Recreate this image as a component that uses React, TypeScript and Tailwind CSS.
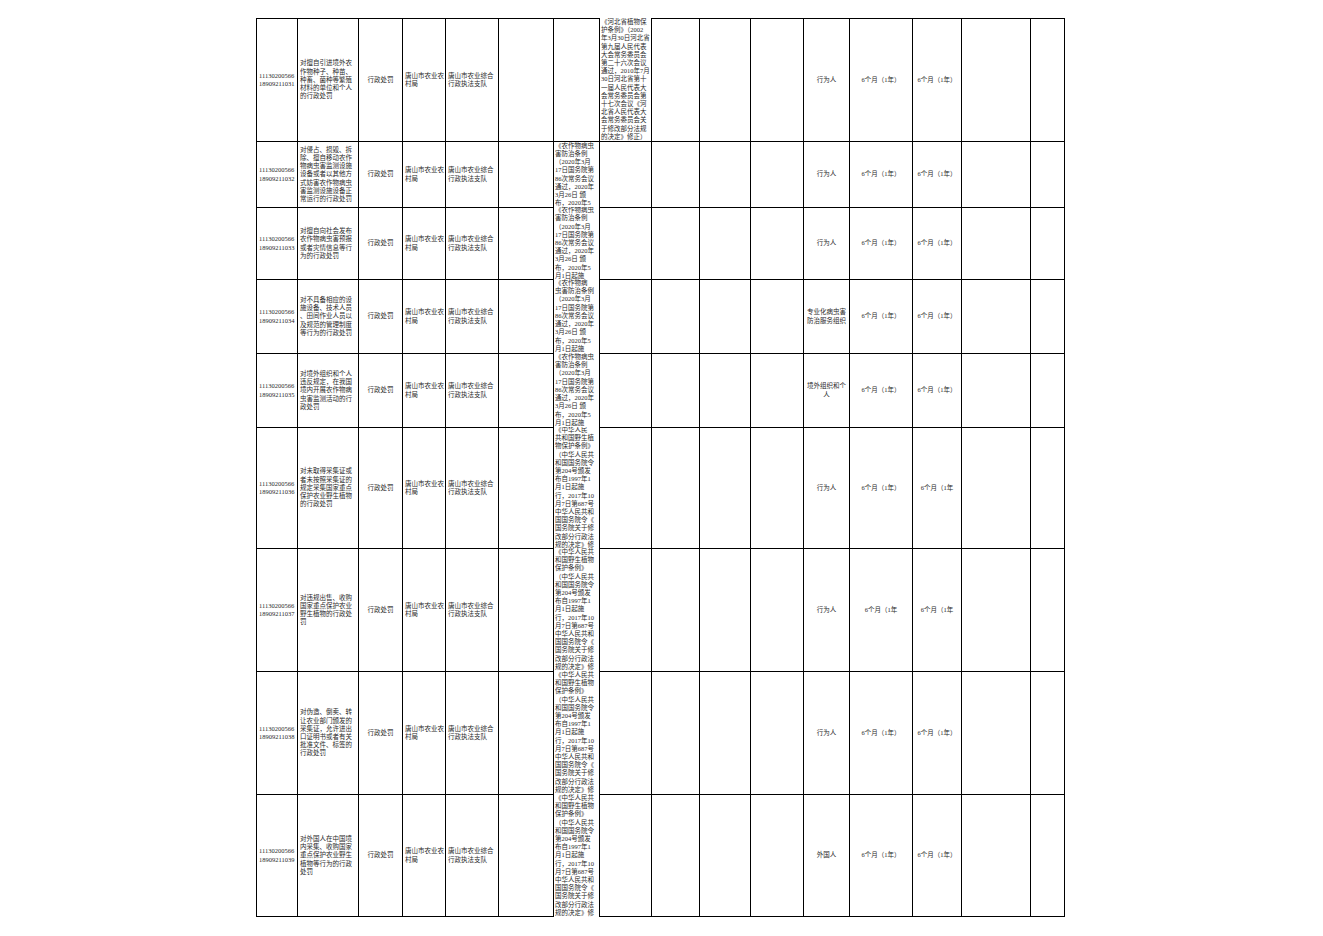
import React from 'react';

interface Row {
  id: string;
  desc: string[];
  law7: string[] | null;
  law8: string[] | null;
  subject: string[];
  t1: string;
  t2: string;
}

const PEST = [
  '《农作物病虫',
  '害防治条例',
  '（2020年3月',
  '17日国务院第',
  '86次常务会议',
  '通过，2020年',
  '3月26日 颁',
  '布，2020年5',
  '月1日起施',
];

const PLANT = [
  '《中华人民共',
  '和国野生植物',
  '保护条例》',
  '（中华人民共',
  '和国国务院令',
  '第204号颁发',
  '布自1997年1',
  '月1日起施',
  '行，2017年10',
  '月7日第687号',
  '中华人民共和',
  '国国务院令《',
  '国务院关于修',
  '改部分行政法',
  '规的决定》修',
];

const HEBEI = [
  '《河北省植物保',
  '护条例》（2002',
  '年3月30日河北省',
  '第九届人民代表',
  '大会常务委员会',
  '第二十六次会议',
  '通过，2010年7月',
  '30日河北省第十',
  '一届人民代表大',
  '会常务委员会第',
  '十七次会议《河',
  '北省人民代表大',
  '会常务委员会关',
  '于修改部分法规',
  '的决定》修正）',
];

const FULL = '6个月（1年）';
const CUT = '6个月（1年';

const rows: Row[] = [
  {
    id: '18909211031',
    desc: ['对擅自引进境外农', '作物种子、种苗、', '种畜、菌种等繁殖', '材料的单位和个人', '的行政处罚'],
    law7: null,
    law8: HEBEI,
    subject: ['行为人'],
    t1: FULL,
    t2: FULL,
  },
  {
    id: '18909211032',
    desc: ['对侵占、损毁、拆', '除、擅自移动农作', '物病虫害监测设施', '设备或者以其他方', '式妨害农作物病虫', '害监测设施设备正', '常运行的行政处罚'],
    law7: PEST.slice(0, 8),
    law8: null,
    subject: ['行为人'],
    t1: FULL,
    t2: FULL,
  },
  {
    id: '18909211033',
    desc: ['对擅自向社会发布', '农作物病虫害预报', '或者灾情信息等行', '为的行政处罚'],
    law7: PEST,
    law8: null,
    subject: ['行为人'],
    t1: FULL,
    t2: FULL,
  },
  {
    id: '18909211034',
    desc: ['对不具备相应的设', '施设备、技术人员', '、田间作业人员以', '及规范的管理制度', '等行为的行政处罚'],
    law7: ['《农作物病', '虫害防治条例', ...PEST.slice(2)],
    law8: null,
    subject: ['专业化病虫害', '防治服务组织'],
    t1: FULL,
    t2: FULL,
  },
  {
    id: '18909211035',
    desc: ['对境外组织和个人', '违反规定，在我国', '境内开展农作物病', '虫害监测活动的行', '政处罚'],
    law7: PEST,
    law8: null,
    subject: ['境外组织和个', '人'],
    t1: FULL,
    t2: FULL,
  },
  {
    id: '18909211036',
    desc: ['对未取得采集证或', '者未按照采集证的', '规定采集国家重点', '保护农业野生植物', '的行政处罚'],
    law7: ['《中华人民', '共和国野生植', '物保护条例》', ...PLANT.slice(3)],
    law8: null,
    subject: ['行为人'],
    t1: FULL,
    t2: CUT,
  },
  {
    id: '18909211037',
    desc: ['对违规出售、收购', '国家重点保护农业', '野生植物的行政处', '罚'],
    law7: PLANT,
    law8: null,
    subject: ['行为人'],
    t1: CUT,
    t2: CUT,
  },
  {
    id: '18909211038',
    desc: ['对伪造、倒卖、转', '让农业部门颁发的', '采集证，允许进出', '口证明书或者有关', '批准文件、标签的', '行政处罚'],
    law7: PLANT,
    law8: null,
    subject: ['行为人'],
    t1: FULL,
    t2: FULL,
  },
  {
    id: '18909211039',
    desc: ['对外国人在中国境', '内采集、收购国家', '重点保护农业野生', '植物等行为的行政', '处罚'],
    law7: PLANT,
    law8: null,
    subject: ['外国人'],
    t1: FULL,
    t2: FULL,
  },
];

function Lines({ lines }: { lines: string[] }) {
  return (
    <>
      {lines.map((l, i) => (
        <div key={i} className="whitespace-nowrap">
          {l}
        </div>
      ))}
    </>
  );
}

export default function App() {
  const last = rows.length - 1;

  return (
    <div
      className="min-h-[936px] w-full bg-white pt-[18px] pl-[256px] text-[6.5px] leading-[8.2px] text-[#2a2a2a]"
      style={{ fontFamily: '"Liberation Serif", "Noto Sans CJK SC", serif' }}
    >
      <div className="grid w-[809px] grid-cols-[41px_61px_44px_43px_53px_55px_46px_52px_48px_51px_53px_46px_63px_49px_69px_35px] grid-rows-[123px_66px_72px_74px_74px_121px_123px_123px_123px]">
        {rows.map((r, i) => {
          const b = 'border-l border-black ' + (i === last ? 'border-b ' : '');
          const top = 'border-t border-black ';
          return (
            <React.Fragment key={r.id}>
              <div className={top + b + 'flex flex-col justify-center pl-[2px] overflow-hidden'}>
                <div>11130200566</div>
                <div>{r.id}</div>
              </div>
              <div className={top + b + 'flex flex-col justify-center pl-[2px] overflow-hidden'}>
                <Lines lines={r.desc} />
              </div>
              <div className={top + b + 'flex items-center justify-center overflow-hidden'}>行政处罚</div>
              <div className={top + b + 'flex flex-col justify-center pl-[2px] overflow-hidden'}>
                <div className="whitespace-nowrap">唐山市农业农</div>
                <div>村局</div>
              </div>
              <div className={top + b + 'flex flex-col justify-center pl-[2px] overflow-hidden'}>
                <div className="whitespace-nowrap">唐山市农业综合</div>
                <div>行政执法支队</div>
              </div>
              <div className={top + b} />
              <div
                className={
                  (i <= 1 ? top : '') +
                  'border-l border-black flex flex-col justify-center pl-[1px] overflow-hidden'
                }
              >
                {r.law7 && <Lines lines={r.law7} />}
              </div>
              <div
                className={
                  (i === 0 ? '' : top) +
                  b +
                  'flex flex-col justify-center pl-[1px] overflow-hidden'
                }
              >
                {r.law8 && <Lines lines={r.law8} />}
              </div>
              <div className={top + b} />
              <div className={top + b} />
              <div className={top + b} />
              <div className={top + b + 'flex flex-col items-center justify-center text-center overflow-hidden'}>
                <Lines lines={r.subject} />
              </div>
              <div className={top + b + 'flex items-center justify-center whitespace-nowrap overflow-hidden'}>{r.t1}</div>
              <div className={top + b + 'flex items-center justify-center whitespace-nowrap overflow-hidden'}>{r.t2}</div>
              <div className={top + b} />
              <div className={top + b + 'border-r'} />
            </React.Fragment>
          );
        })}
      </div>
    </div>
  );
}
